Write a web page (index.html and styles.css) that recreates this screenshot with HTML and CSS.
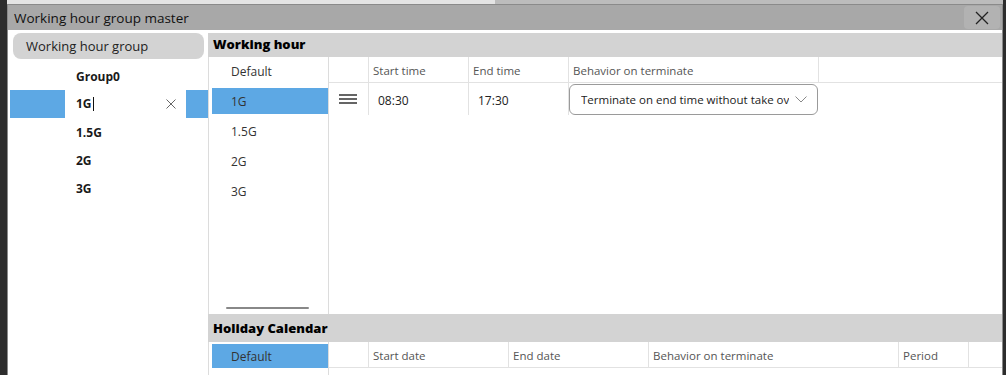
FILE: index.html
```html
<!DOCTYPE html>
<html lang="en">
<head>
    <meta charset="UTF-8">
    <title>Working hour group master</title>
    <link rel="stylesheet" href="styles.css">
</head>
<body>
    <div class="top-strip"></div>

    <div class="window">
        <div class="titlebar">
            <span class="title">Working hour group master</span>
            <button class="close-btn">
                <svg width="14" height="14" viewBox="0 0 14 14"><path d="M1 1L13 13M13 1L1 13" stroke="#222" stroke-width="1.3"/></svg>
            </button>
        </div>

        <div class="content">
            <!-- Group list on the left -->
            <aside class="groups">
                <div class="groups-title">Working hour group</div>
                <ul class="group-list">
                    <li>Group0</li>
                    <li class="editing">
                        <div class="edit-box">
                            <span>1G</span><span class="caret"></span>
                            <svg class="clear" width="10" height="10" viewBox="0 0 10 10"><path d="M0.5 0.5L9.5 9.5M9.5 0.5L0.5 9.5" stroke="#666" stroke-width="1"/></svg>
                        </div>
                    </li>
                    <li>1.5G</li>
                    <li>2G</li>
                    <li>3G</li>
                </ul>
            </aside>

            <main class="detail">
                <section class="working">
                    <div class="section-head">Working hour</div>
                    <div class="section-body">
                        <div class="pattern-list">
                            <div class="pattern">Default</div>
                            <div class="pattern selected">1G</div>
                            <div class="pattern">1.5G</div>
                            <div class="pattern">2G</div>
                            <div class="pattern">3G</div>
                            <div class="thumb"></div>
                        </div>
                        <div class="grid hours">
                            <div class="th"></div>
                            <div class="th">Start time</div>
                            <div class="th">End time</div>
                            <div class="th">Behavior on terminate</div>
                            <div class="th last"></div>

                            <div class="td handle">
                                <svg width="18" height="10" viewBox="0 0 18 10"><path d="M0 1H18M0 5H18M0 9H18" stroke="#333" stroke-width="1.3"/></svg>
                            </div>
                            <div class="td">08:30</div>
                            <div class="td">17:30</div>
                            <div class="td plain">
                                <div class="select">
                                    <span class="select-text">Terminate on end time without take ov</span>
                                    <svg width="12" height="7" viewBox="0 0 12 7"><path d="M0.5 0.5L6 6L11.5 0.5" stroke="#888" stroke-width="1" fill="none"/></svg>
                                </div>
                            </div>
                            <div class="td plain"></div>
                        </div>
                    </div>
                </section>

                <section class="holiday">
                    <div class="section-head tall">Holiday Calendar</div>
                    <div class="section-body">
                        <div class="pattern-list short">
                            <div class="pattern selected small">Default</div>
                        </div>
                        <div class="grid dates">
                            <div class="th"></div>
                            <div class="th">Start date</div>
                            <div class="th">End date</div>
                            <div class="th">Behavior on terminate</div>
                            <div class="th">Period</div>
                            <div class="th last"></div>
                        </div>
                    </div>
                </section>
            </main>
        </div>
    </div>
</body>
</html>
```

FILE: styles.css
```css
body {
    margin: 0;
    padding: 0 3px 0 7px;
    background-color: #2d2d2d;
    font-family: 'Open Sans', 'Noto Sans', sans-serif;
    color: #1a1a1a;
    height: 375px;
    overflow: hidden;
}

.top-strip {
    height: 4px;
    background: linear-gradient(to right, #e4e4e4 0, #e4e4e4 488px, #bcbcbc 488px);
}

.window {
    border: 1px solid #8a8a8a;
    border-bottom: none;
    background-color: #ffffff;
    height: 371px;
    box-sizing: border-box;
    display: flex;
    flex-direction: column;
}

.titlebar {
    flex-shrink: 0;
    height: 25px;
    background-color: #a8a8a8;
    display: flex;
    align-items: center;
    justify-content: space-between;
    padding: 0 2px 0 6px;
}

.title {
    font-size: 13.5px;
    color: #111;
}

.close-btn {
    width: 36px;
    height: 23px;
    border: none;
    border-radius: 4px;
    background-color: #b2b2b2;
    display: flex;
    align-items: center;
    justify-content: center;
    padding: 0;
}

.content {
    flex: 1;
    display: flex;
    overflow: hidden;
}

/* left pane */
.groups {
    width: 200px;
    flex-shrink: 0;
}

.groups-title {
    margin: 3px 4px 0 5px;
    height: 26px;
    line-height: 27px;
    border-radius: 8px;
    background-color: #d3d3d3;
    font-size: 13px;
    padding-left: 13px;
    color: #222;
}

.group-list {
    list-style: none;
    margin: 3px 0 0 0;
    padding: 0;
}

.group-list li {
    height: 28px;
    line-height: 30px;
    font-size: 12px;
    font-weight: bold;
    padding-left: 68px;
}

.group-list li.editing {
    margin-left: 2px;
    padding: 0 22px 0 55px;
    background-color: #5da8e4;
}

.edit-box {
    height: 28px;
    background-color: #ffffff;
    padding-left: 11px;
    display: flex;
    align-items: center;
}

.caret {
    width: 1px;
    height: 14px;
    background-color: #111;
    margin-left: 1px;
}

.clear {
    margin-left: auto;
    margin-right: 10px;
}

/* right pane */
.detail {
    flex: 1;
    padding-top: 3px;
    display: flex;
    flex-direction: column;
}

.section-head {
    flex-shrink: 0;
    height: 24px;
    line-height: 22px;
    background-color: #d3d3d3;
    font-size: 13px;
    font-weight: 800;
    padding-left: 5px;
    color: #000;
}

.section-head.tall {
    height: 28px;
    line-height: 28px;
}

.section-body {
    display: flex;
    flex-shrink: 0;
}

.working .section-body {
    height: 257px;
}

.holiday {
    flex: 1;
}

.holiday .section-body {
    height: 40px;
}

.pattern-list {
    width: 116px;
    border-left: 1px solid #dcdcdc;
    border-right: 1px solid #dcdcdc;
    padding: 1px 0 0 3px;
    display: flex;
    flex-direction: column;
    flex-shrink: 0;
}

.pattern-list.short {
    padding-top: 2px;
}

.pattern {
    height: 26px;
    line-height: 28px;
    margin: 0 0 4px 0;
    padding-left: 19px;
    font-size: 12px;
    color: #333;
}

.pattern.selected {
    background-color: #5da8e4;
}

.pattern.small {
    height: 24px;
    line-height: 25px;
}

.thumb {
    margin: auto 0 5px 14px;
    width: 83px;
    height: 2px;
    border-radius: 1px;
    background-color: #888888;
}

.grid {
    flex: 1;
    display: grid;
    align-content: start;
}

.grid.hours {
    grid-template-columns: 40px 100px 100px 250px 1fr;
    grid-template-rows: 26px 32px;
}

.grid.dates {
    grid-template-columns: 40px 140px 140px 250px 70px 1fr;
    grid-template-rows: 26px;
}

.th {
    border-right: 1px solid #e2e2e2;
    border-bottom: 1px solid #e2e2e2;
    font-size: 11.5px;
    color: #555;
    padding-left: 4px;
    line-height: 28px;
    white-space: nowrap;
}

.th.last {
    border-right: none;
}

.td {
    border-right: 1px solid #e2e2e2;
    font-size: 12px;
    color: #222;
    padding-left: 9px;
    padding-top: 2px;
    display: flex;
    align-items: center;
}

.td.handle {
    padding-left: 10px;
    padding-top: 0;
}

.td.plain {
    border-right: none;
    padding-left: 0;
    padding-top: 0;
}

.select {
    width: 249px;
    height: 31px;
    box-sizing: border-box;
    border: 1px solid #9a9a9a;
    border-radius: 6px;
    display: flex;
    align-items: center;
    padding: 1px 10px 0 11px;
    font-size: 11.5px;
    color: #222;
}

.select-text {
    flex: 1;
    white-space: nowrap;
    overflow: hidden;
}

.select svg {
    margin-left: 6px;
    flex-shrink: 0;
}
```
